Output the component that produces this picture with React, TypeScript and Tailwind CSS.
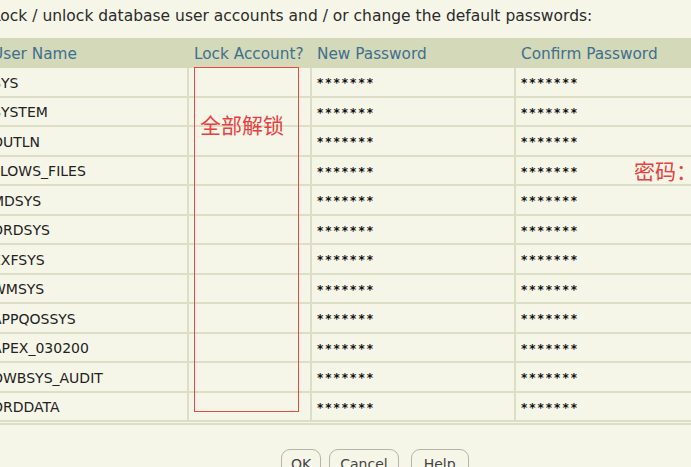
const users = [
  'SYS',
  'SYSTEM',
  'OUTLN',
  'FLOWS_FILES',
  'MDSYS',
  'ORDSYS',
  'EXFSYS',
  'WMSYS',
  'APPQOSSYS',
  'APEX_030200',
  'OWBSYS_AUDIT',
  'ORDDATA',
];

const cell = 'flex items-center pl-[5px] pt-[3px] border-b-2 border-[#dcdec6] h-[29.5px]';
const cellSep = 'border-r-2 border-r-[#dcdec6]';
const head = 'h-[30px] bg-[#d3d9b9] flex items-center pl-[5px] pt-[3px] text-[15.3px] text-[#3f6f8d] whitespace-nowrap';

export default function App() {
  return (
    <div
      className="relative w-[691px] h-[467px] overflow-hidden bg-[#f6f6e8] text-[#222] text-[14px]"
      style={{ fontFamily: '"DejaVu Sans", "Noto Sans CJK SC", sans-serif' }}
    >
      <p className="ml-[-8px] pt-[6px] h-[38px] leading-[21px] text-[15.5px] whitespace-nowrap text-[#2a2a2a]">
        Lock / unlock database user accounts and / or change the default passwords:
      </p>

      <div className="ml-[-13px] grid grid-cols-[202px_123px_204px_200px]">
        <div className={head}>User Name</div>
        <div className={head}>Lock Account?</div>
        <div className={head}>New Password</div>
        <div className={head}>Confirm Password</div>

        {users.map(u => (
          <div key={u} className="contents">
            <div className={`${cell} ${cellSep}`}>{u}</div>
            <div className={`${cell} ${cellSep}`}></div>
            <div className={`${cell} ${cellSep} text-[12px] font-bold tracking-[2px] text-[#111]`}>*******</div>
            <div className={`${cell} text-[12px] font-bold tracking-[2px] text-[#111]`}>*******</div>
          </div>
        ))}
      </div>
      <div className="h-[2px] mt-[1px] bg-[#dcdec6]" />

      <div className="flex gap-[10px] pl-[281px] pt-[24px] text-[#444]">
        <button className="h-[28px] px-[9px] pt-[2px] rounded-[9px] border-[1.5px] border-[#b4b4a8] bg-[#f6f6e8]">OK</button>
        <button className="h-[28px] px-[10px] pt-[2px] rounded-[9px] border-[1.5px] border-[#b4b4a8] bg-[#f6f6e8] ml-[-2px]">Cancel</button>
        <button className="h-[28px] px-[12px] pt-[2px] rounded-[9px] border-[1.5px] border-[#b4b4a8] bg-[#f6f6e8] ml-[2px]">Help</button>
      </div>

      {/* red annotations over the screenshot */}
      <div className="absolute left-[194px] top-[67px] w-[105px] h-[345px] border-[1.5px] border-[#e84848]" />
      <div className="absolute left-[200px] top-[112px] text-[21px] leading-[28px] text-[#e84040]">全部解锁</div>
      <div className="absolute left-[634px] top-[158px] text-[21px] leading-[28px] text-[#e84040] whitespace-nowrap">密码：</div>
    </div>
  );
}
